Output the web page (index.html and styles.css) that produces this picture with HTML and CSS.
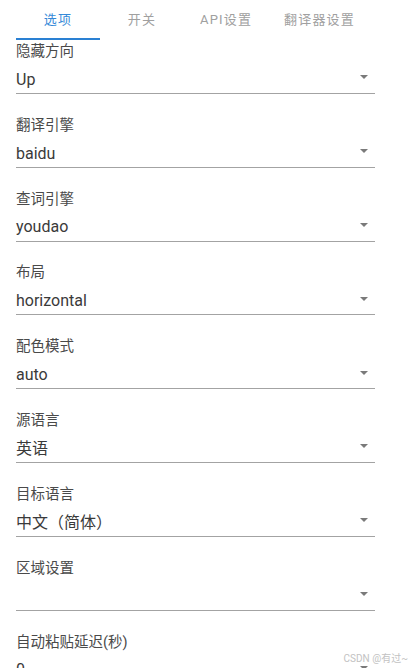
FILE: index.html
```html
<!DOCTYPE html>
<html lang="zh-CN">

<head>
    <meta charset="UTF-8">
    <meta name="viewport" content="width=device-width, initial-scale=1.0">
    <title>选项</title>
    <link rel="stylesheet" href="styles.css">
</head>

<body>
    <nav class="tabs">
        <div class="tab active">选项</div>
        <div class="tab">开关</div>
        <div class="tab">API设置</div>
        <div class="tab">翻译器设置</div>
    </nav>

    <form class="settings">
        <div class="field">
            <div class="field-label">隐藏方向</div>
            <div class="field-control">
                <span class="field-value">Up</span>
                <svg class="field-arrow" viewBox="0 0 10 5"><path d="M0 0h10L5 5z"/></svg>
            </div>
        </div>
        <div class="field">
            <div class="field-label">翻译引擎</div>
            <div class="field-control">
                <span class="field-value">baidu</span>
                <svg class="field-arrow" viewBox="0 0 10 5"><path d="M0 0h10L5 5z"/></svg>
            </div>
        </div>
        <div class="field">
            <div class="field-label">查词引擎</div>
            <div class="field-control">
                <span class="field-value">youdao</span>
                <svg class="field-arrow" viewBox="0 0 10 5"><path d="M0 0h10L5 5z"/></svg>
            </div>
        </div>
        <div class="field">
            <div class="field-label">布局</div>
            <div class="field-control">
                <span class="field-value">horizontal</span>
                <svg class="field-arrow" viewBox="0 0 10 5"><path d="M0 0h10L5 5z"/></svg>
            </div>
        </div>
        <div class="field">
            <div class="field-label">配色模式</div>
            <div class="field-control">
                <span class="field-value">auto</span>
                <svg class="field-arrow" viewBox="0 0 10 5"><path d="M0 0h10L5 5z"/></svg>
            </div>
        </div>
        <div class="field">
            <div class="field-label">源语言</div>
            <div class="field-control">
                <span class="field-value">英语</span>
                <svg class="field-arrow" viewBox="0 0 10 5"><path d="M0 0h10L5 5z"/></svg>
            </div>
        </div>
        <div class="field">
            <div class="field-label">目标语言</div>
            <div class="field-control">
                <span class="field-value">中文（简体）</span>
                <svg class="field-arrow" viewBox="0 0 10 5"><path d="M0 0h10L5 5z"/></svg>
            </div>
        </div>
        <div class="field">
            <div class="field-label">区域设置</div>
            <div class="field-control">
                <span class="field-value"></span>
                <svg class="field-arrow" viewBox="0 0 10 5"><path d="M0 0h10L5 5z"/></svg>
            </div>
        </div>
        <div class="field">
            <div class="field-label">自动粘贴延迟(秒)</div>
            <div class="field-control">
                <span class="field-value">0</span>
                <svg class="field-arrow" viewBox="0 0 10 5"><path d="M0 0h10L5 5z"/></svg>
            </div>
        </div>
    </form>

    <div class="watermark">CSDN @有过~</div>
</body>

</html>
```

FILE: styles.css
```css
* {
    box-sizing: border-box;
}

html {
    overflow: hidden;
}

body {
    margin: 0;
    background-color: #fff;
    color: #3c3c3c;
    font-family: Roboto, "Noto Sans CJK SC", sans-serif;
}

.tabs {
    display: flex;
    height: 40px;
    padding-left: 16px;
}

.tab {
    display: flex;
    align-items: center;
    justify-content: center;
    min-width: 84px;
    padding: 0 16px 2px 16px;
    border-bottom: 2px solid transparent;
    font-size: 13px;
    letter-spacing: 0.09em;
    color: #a0a0a0;
}

.tab.active {
    color: #3589d8;
    border-bottom-color: #2a80d3;
}

.settings {
    padding: 0 36px 0 16px;
}

.field {
    margin-top: 21.83px;
}

.field:first-child {
    margin-top: 2px;
}

.field-label {
    font-size: 14.5px;
    line-height: 20px;
    color: #4a4a4a;
}

.field-control {
    display: flex;
    align-items: center;
    justify-content: space-between;
    height: 26.5px;
    margin-top: 5.5px;
    padding-bottom: 1px;
    border-bottom: 1px solid #a3a3a3;
    font-size: 16px;
    line-height: 24px;
    color: #3a3a3a;
}

.field-arrow {
    width: 8px;
    height: 4px;
    margin: 0 7px 5px 0;
    fill: #7a7a7a;
}

.watermark {
    position: absolute;
    top: 650px;
    right: 3px;
    font-size: 10px;
    color: #c2c2c2;
}
```
